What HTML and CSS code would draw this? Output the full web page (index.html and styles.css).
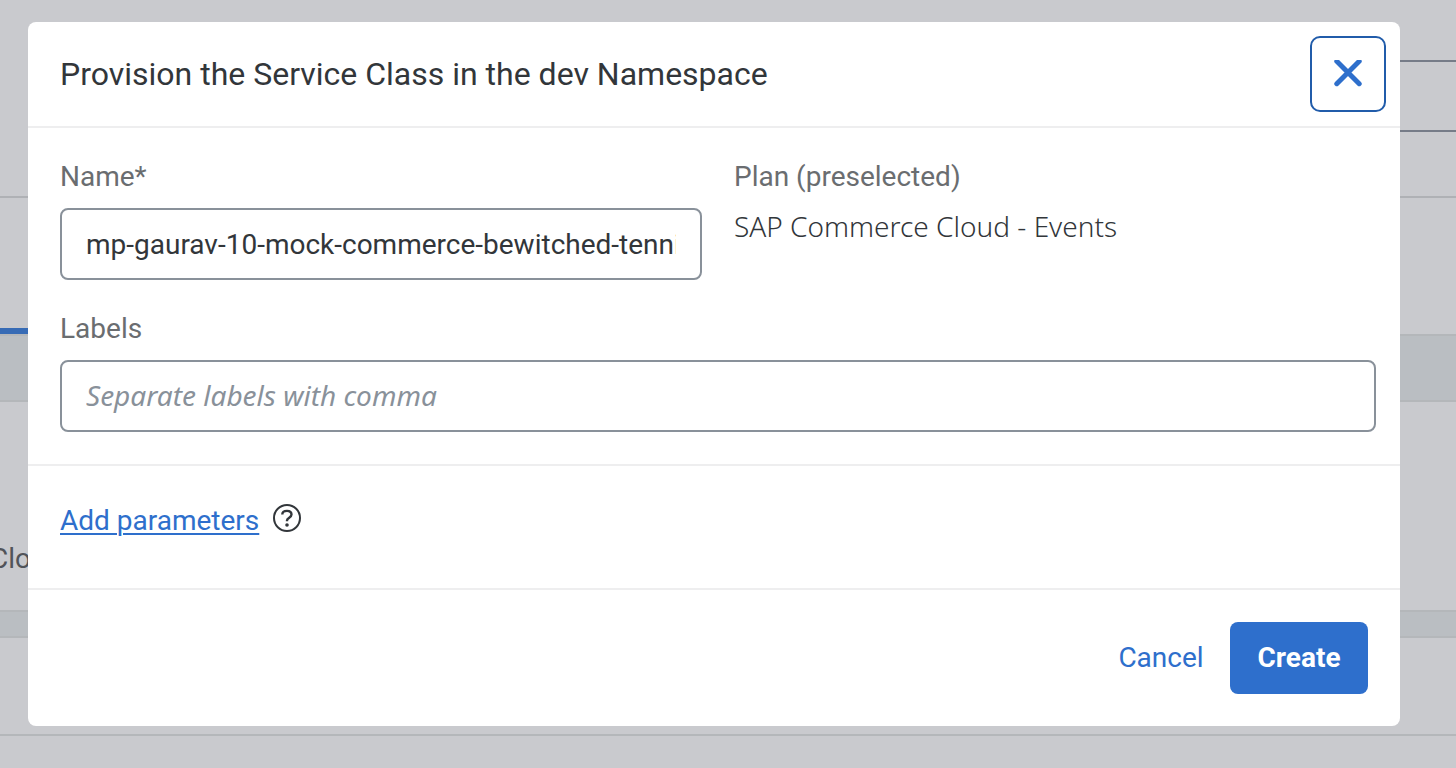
FILE: index.html
```html
<!DOCTYPE html>
<html lang="en">
<head>
<meta charset="utf-8">
<title>Provision the Service Class</title>
<link rel="stylesheet" href="styles.css">
</head>
<body>
<main class="page" inert>
  <div class="page-search"><div class="page-search-box"></div></div>
  <div class="page-tabs"><div class="page-tab-marker"></div></div>
  <div class="page-band page-band-large"></div>
  <div class="page-row">Clo</div>
  <div class="page-band page-band-small"></div>
  <div class="page-panel"></div>
</main>
<div class="overlay">
  <form class="dialog" role="dialog" aria-labelledby="dialog-title">
    <header class="dialog-header">
      <h1 class="dialog-title" id="dialog-title">Provision the Service Class in the dev Namespace</h1>
      <button class="close-button" type="button" aria-label="Close">
        <svg class="close-icon" viewBox="0 0 28 28" aria-hidden="true"><path d="M2.8 1.3 25.2 23.7M25.2 1.3 2.8 23.7"/></svg>
      </button>
    </header>
    <section class="fields">
      <div class="field">
        <label class="field-label" for="name">Name*</label>
        <input class="text-input" id="name" type="text" required value="mp-gaurav-10-mock-commerce-bewitched-tennis">
      </div>
      <div class="field">
        <span class="field-label">Plan (preselected)</span>
        <span class="plan-value">SAP Commerce Cloud - Events</span>
      </div>
      <div class="field field-wide">
        <label class="field-label" for="labels">Labels</label>
        <input class="text-input" id="labels" type="text" placeholder="Separate labels with comma">
      </div>
    </section>
    <section class="parameters">
      <a class="parameters-link" href="#">Add parameters</a>
      <svg class="help-icon" viewBox="0 0 28 28" role="img" aria-label="Help"><circle cx="14" cy="14" r="13"/><path class="help-mark" d="M9.3 10.4C9.3 8 11.3 6.9 14 6.9s4.5 1.3 4.5 3.7c0 3.2-4.5 3-4.5 6v.6"/><circle class="help-dot" cx="14" cy="21" r="1.8"/></svg>
    </section>
    <footer class="dialog-footer">
      <button class="button" type="button">Cancel</button>
      <button class="button button-primary" type="submit">Create</button>
    </footer>
  </form>
</div>
</body>
</html>
```
FILE: styles.css
```css
* { box-sizing: border-box; }

body {
  margin: 0;
  min-height: 100vh;
  overflow: hidden;
  background: #c9cace;
  color: #32363a;
  font: 28px/34px Roboto, "Noto Sans", sans-serif;
}

.page-search {
  display: flex;
  justify-content: flex-end;
  padding: 60px 0 64px;
  border-bottom: 2px solid #afb1b5;
}

.page-search-box {
  width: 50%;
  height: 72px;
  border: solid #767c88;
  border-width: 2px 0;
}

.page-tabs {
  display: flex;
  align-items: flex-end;
  height: 136px;
}

.page-tab-marker {
  width: 10%;
  height: 6px;
  background: #376bb5;
}

.page-band {
  border: solid #b4b7ba;
  border-width: 2px 0;
  background: #babec2;
}

.page-band-large { height: 68px; }
.page-band-small { height: 28px; }

.page-row {
  padding: 140px 0 34px;
  margin-left: -10px;
  color: #515459;
}

.page-panel {
  height: 98px;
  border-bottom: 2px solid #b4b7ba;
}

.overlay {
  position: fixed;
  inset: 0;
  padding: 22px 56px 22px 28px;
}

.dialog {
  border-radius: 8px;
  background: #fff;
}

.dialog-header {
  display: flex;
  align-items: center;
  justify-content: space-between;
  padding: 14px 14px 14px 32px;
  border-bottom: 2px solid #eeeeef;
}

.dialog-title {
  margin: 0;
  font-size: 32px;
  line-height: 40px;
  font-weight: 400;
}

.close-button {
  display: grid;
  place-items: center;
  width: 76px;
  height: 76px;
  padding: 0;
  border: 2px solid #215caa;
  border-radius: 10px;
  background: #fff;
}

.close-icon {
  width: 28px;
  height: 28px;
  fill: none;
  stroke: #2e6fcc;
  stroke-width: 5;
  stroke-linecap: round;
}

.fields {
  display: grid;
  grid-template-columns: 1fr 1fr;
  gap: 32px;
  padding: 32px 24px 32px 32px;
  border-bottom: 2px solid #eeeeef;
}

.field {
  display: flex;
  flex-direction: column;
  gap: 14px;
  min-width: 0;
}

.field-wide { grid-column: 1 / -1; }

.field-label { color: #6a6d70; }

.plan-value {
  font-family: "Noto Sans", sans-serif;
  font-weight: 300;
  line-height: 36px;
}

.text-input {
  width: 100%;
  height: 72px;
  padding: 0 24px;
  border: 2px solid #89919a;
  border-radius: 8px;
  background: #fff;
  color: #32363a;
  font: inherit;
}

.text-input::placeholder {
  color: #89919a;
  font-family: "Noto Sans", sans-serif;
  font-style: italic;
  opacity: 1;
}

.parameters {
  display: flex;
  gap: 14px;
  padding: 38px 32px 50px;
  border-bottom: 2px solid #eeeeef;
}

.parameters-link {
  color: #2e6fcc;
  text-decoration-thickness: 2px;
  text-underline-offset: 3px;
}

.help-icon {
  width: 28px;
  height: 28px;
  fill: none;
  stroke: #32363a;
  stroke-width: 2;
}

.help-icon .help-mark { stroke-width: 2.4; }

.help-icon .help-dot {
  fill: #32363a;
  stroke: none;
}

.dialog-footer {
  display: flex;
  justify-content: flex-end;
  padding: 32px;
}

.button {
  min-width: 138px;
  height: 72px;
  padding: 0 26px;
  border: 0;
  border-radius: 8px;
  background: #fff;
  color: #2e6fcc;
  font: inherit;
}

.button-primary {
  background: #2e6fcc;
  color: #fff;
  font-weight: 700;
}
```
